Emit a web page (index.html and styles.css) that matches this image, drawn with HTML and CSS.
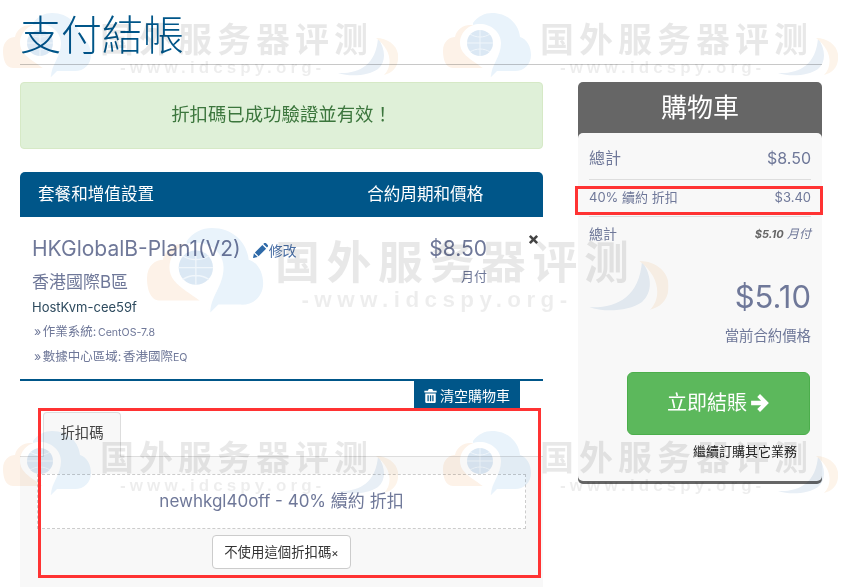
FILE: index.html
```html
<!doctype html>
<html lang="zh-Hant">

<head>
    <meta charset="utf-8">
    <title>支付結帳</title>
    <link rel="stylesheet" href="styles.css">
</head>

<body>
    <svg class="svg-defs" width="0" height="0">
        <defs>
            <g id="wm-cloud">
                <path d="M22 55H10C2 55 0 45 0 38c0-10 7-14 12-14 2-10 14-15 22-10l6 41z" fill="#fdf2e8" />
                <path d="M49 0c17 0 27 12 28 24 7 2 11 10 11 18 0 10-8 17-18 16H54l-6 6-16-30L30 10C35 3 42 0 49 0z" fill="#e9f3fb" />
                <path d="M48 64C40 50 17 46 17 30c0-11 9-19 20-19s21 8 21 19c0 14-10 22-10 34z" fill="#fff" />
                <circle cx="37" cy="30" r="13" fill="#dbe8f4" />
                <path d="M24 30h26M37 17v26M27 21c6 4 14 4 20 0M27 39c6-4 14-4 20 0" stroke="#f0f6fb" stroke-width="1" fill="none" />
            </g>
            <g id="wm-swoosh">
                <path d="M0 35c20 1 38-7 40-35 8 12 8 24 0 31-10 7-28 8-40 4z" fill="#e8eff6" />
                <path d="M38 0c14 0 24 10 22 22-1 8-6 13-14 15 8-8 9-24-8-37z" fill="#fdf4ea" />
            </g>
        </defs>
    </svg>

    <div class="wm wm-tl">
        <svg class="wm-cloud" viewBox="0 0 90 70"><use href="#wm-cloud" /></svg>
        <div class="wm-name">国外服务器评测</div>
        <div class="wm-url">-www.idcspy.org-</div>
        <svg class="wm-swoosh" viewBox="0 0 60 40"><use href="#wm-swoosh" /></svg>
    </div>
    <div class="wm wm-tr">
        <svg class="wm-cloud" viewBox="0 0 90 70"><use href="#wm-cloud" /></svg>
        <div class="wm-name">国外服务器评测</div>
        <div class="wm-url">-www.idcspy.org-</div>
        <svg class="wm-swoosh" viewBox="0 0 60 40"><use href="#wm-swoosh" /></svg>
    </div>
    <div class="wm wm-mid">
        <svg class="wm-cloud" viewBox="0 0 90 70"><use href="#wm-cloud" /></svg>
        <div class="wm-name">国外服务器评测</div>
        <div class="wm-url">-www.idcspy.org-</div>
        <svg class="wm-swoosh" viewBox="0 0 60 40"><use href="#wm-swoosh" /></svg>
    </div>
    <div class="wm wm-bl">
        <svg class="wm-cloud" viewBox="0 0 90 70"><use href="#wm-cloud" /></svg>
        <div class="wm-name">国外服务器评测</div>
        <div class="wm-url">-www.idcspy.org-</div>
        <svg class="wm-swoosh" viewBox="0 0 60 40"><use href="#wm-swoosh" /></svg>
    </div>
    <div class="wm wm-br">
        <svg class="wm-cloud" viewBox="0 0 90 70"><use href="#wm-cloud" /></svg>
        <div class="wm-name">国外服务器评测</div>
        <div class="wm-url">-www.idcspy.org-</div>
        <svg class="wm-swoosh" viewBox="0 0 60 40"><use href="#wm-swoosh" /></svg>
    </div>

    <div class="page">
        <h1 class="page-title">支付結帳</h1>

        <div class="columns">
            <div class="main-col">
                <div class="alert-ok">折扣碼已成功驗證並有效！</div>

                <div class="items-head">
                    <span>套餐和增值設置</span>
                    <span class="items-head-price">合約周期和價格</span>
                </div>

                <div class="item">
                    <div class="item-info">
                        <div class="item-name">HKGlobalB-Plan1(V2)
                            <a class="item-edit">
                                <svg class="icon-pencil" viewBox="0 0 16 16"><path d="M0 16l1-5 4 4zM2 10l8-8 4 4-8 8zM11 1l1-1c1-.4 1.500-.2 2 .3l1.700 1.700c.5.5.6 1.200.2 1.800l-1 1z" /></svg>修改
                            </a>
                        </div>
                        <div class="item-group">香港國際B區</div>
                        <div class="item-host">HostKvm-cee59f</div>
                        <div class="item-opt">» 作業系統: <small>CentOS-7.8</small></div>
                        <div class="item-opt">» 數據中心區域: 香港國際<small>EQ</small></div>
                    </div>
                    <div class="item-price">
                        <div class="item-amount">$8.50</div>
                        <div class="item-cycle">月付</div>
                    </div>
                    <svg class="item-remove" viewBox="0 0 12 12"><path d="M1 3l2-2 3 3 3-3 2 2-3 3 3 3-2 2-3-3-3 3-2-2 3-3z" /></svg>
                </div>

                <div class="empty-row">
                    <a class="empty-btn">
                        <svg class="icon-trash" viewBox="0 0 14 16"><path d="M5 0h4l1 2h4v2H0V2h4zM1 5h12v10l-1 1H2l-1-1zM3.500 7v7h1.500V7zM6.300 7v7h1.500V7zM9 7v7h1.500V7z" /></svg>清空購物車
                    </a>
                </div>

                <div class="tabs">
                    <a class="tab">折扣碼</a>
                </div>
                <div class="promo-panel">
                    <div class="promo-box">newhkgl40off - 40% 續約 折扣</div>
                    <a class="promo-remove">不使用這個折扣碼<small>×</small></a>
                </div>
            </div>

            <div class="cart">
                <div class="cart-title">購物車</div>
                <div class="cart-body">
                    <div class="cart-row cart-row-sub"><span>總計</span><span>$8.50</span></div>
                    <div class="cart-row cart-row-disc"><span>40% 續約 折扣</span><span>$3.40</span></div>
                    <div class="cart-row cart-row-recur"><span>總計</span><span class="cart-recur"><b>$5.10</b> 月付</span></div>
                    <div class="cart-total">$5.10</div>
                    <div class="cart-total-label">當前合約價格</div>
                    <a class="checkout-btn">立即結賬<svg class="icon-arrow" viewBox="0 0 18 18"><path d="M1 7h9L6.500 3.500 9 1l8 8-8 8-2.500-2.500L10 11H1z" /></svg></a>
                    <a class="continue-link">繼續訂購其它業務</a>
                </div>
            </div>
        </div>
    </div>

    <div class="mark mark-cart"></div>
    <div class="mark mark-promo"></div>
</body>

</html>
```

FILE: styles.css
```css
html,
body {
    margin: 0;
    background-color: #fff;
    color: #6f7899;
    font-family: "Inter", "Noto Sans CJK TC", sans-serif;
}

body {
    width: 848px;
    height: 588px;
    overflow: hidden;
    position: relative;
}

.svg-defs {
    position: absolute;
}

/* watermark */
.wm {
    position: absolute;
    width: 395px;
    height: 66px;
    z-index: 5;
    pointer-events: none;
    transform-origin: top left;
    mix-blend-mode: multiply;
}

.wm-tl { left: 3px; top: 13px; }
.wm-tr { left: 443px; top: 13px; }
.wm-bl { left: 3px; top: 431px; }
.wm-br { left: 443px; top: 431px; }
.wm-mid { left: 147px; top: 228px; transform: scale(1.32); }

.wm-cloud {
    position: absolute;
    left: 0;
    top: 0;
    width: 90px;
    height: 70px;
}

.wm-name {
    position: absolute;
    left: 97px;
    top: 4px;
    font-family: "Noto Sans CJK SC", sans-serif;
    font-size: 34px;
    line-height: 42px;
    font-weight: 700;
    letter-spacing: 5px;
    white-space: nowrap;
    color: rgba(0, 0, 0, 0.09);
}

.wm-url {
    position: absolute;
    left: 117px;
    top: 45px;
    font-family: "Liberation Sans", sans-serif;
    font-size: 17px;
    line-height: 20px;
    font-weight: 700;
    letter-spacing: 4.100px;
    white-space: nowrap;
    color: rgba(0, 0, 0, 0.07);
}

.wm-swoosh {
    position: absolute;
    left: 335px;
    top: 25px;
    width: 60px;
    height: 40px;
}

/* page */
.page {
    padding: 0 26px 0 20px;
}

.page-title {
    margin: 0;
    height: 64px;
    border-bottom: 1px solid #c8c8c8;
    color: #005689;
    font-size: 41px;
    line-height: 70px;
    font-weight: 300;
}

.columns {
    display: flex;
    gap: 35px;
    padding-top: 17px;
}

.main-col {
    width: 523px;
}

.alert-ok {
    box-sizing: border-box;
    height: 67px;
    background-color: #dff0d8;
    border: 1px solid #d6e9c6;
    border-radius: 4px;
    color: #3c763d;
    font-size: 18.400px;
    line-height: 63px;
    text-align: center;
}

.items-head {
    display: flex;
    height: 45px;
    margin-top: 23px;
    padding-left: 18px;
    background-color: #005689;
    border-radius: 5px 5px 0 0;
    color: #fff;
    font-size: 16.600px;
    line-height: 45px;
}

.items-head-price {
    margin-left: 213px;
}

.item {
    display: flex;
    position: relative;
    height: 162px;
    border-bottom: 2px solid #005689;
}

.item-info {
    width: 388px;
    padding-left: 12px;
    padding-top: 19px;
}

.item-name {
    font-size: 21px;
    line-height: 26px;
    white-space: nowrap;
}

.item-edit {
    font-size: 14px;
    margin-left: 6px;
    color: #4a6fa5;
}

.icon-pencil {
    width: 15px;
    height: 15px;
    margin-right: 1px;
    vertical-align: -2px;
    fill: #2f6aa8;
}

.item-group {
    font-size: 17px;
    line-height: 26px;
    margin-top: 5px;
}

.item-host {
    font-size: 13px;
    line-height: 18px;
    margin-top: 3px;
    color: #2d4a5e;
}

.item-opt {
    font-size: 12.500px;
    line-height: 24px;
    padding-left: 2px;
    word-spacing: -2px;
}

.item-host + .item-opt {
    margin-top: 4px;
}

.item-opt small {
    font-size: 10.600px;
}

.item-price {
    width: 67px;
    padding-top: 19px;
    text-align: right;
}

.item-amount {
    font-size: 21px;
    line-height: 26px;
}

.item-cycle {
    font-size: 13px;
    line-height: 20px;
    margin-top: 4px;
}

.item-remove {
    position: absolute;
    left: 508px;
    top: 17px;
    width: 11px;
    height: 11px;
    fill: #444;
}

.empty-row {
    display: flex;
    justify-content: flex-end;
    padding-right: 23px;
}

.empty-btn {
    box-sizing: border-box;
    width: 106px;
    height: 29px;
    background-color: #005689;
    color: #fff;
    font-size: 14px;
    line-height: 29px;
    text-align: center;
    white-space: nowrap;
}

.icon-trash {
    width: 13px;
    height: 14px;
    margin-right: 3px;
    vertical-align: -2px;
    fill: #fff;
}

.tabs {
    display: flex;
    height: 45px;
    margin-top: 2px;
    padding-left: 23px;
    margin-bottom: -1px;
    position: relative;
}

.tab {
    box-sizing: border-box;
    width: 78px;
    height: 45px;
    background-color: #f8f8f8;
    border: 1px solid #ddd;
    border-bottom: 0;
    border-radius: 4px 4px 0 0;
    color: #444;
    font-size: 14.400px;
    line-height: 40px;
    text-align: center;
}

.promo-panel {
    box-sizing: border-box;
    height: 131px;
    padding: 17px 17px 0;
    background-color: #f8f8f8;
    border-top: 1px solid #ddd;
    text-align: center;
}

.promo-box {
    box-sizing: border-box;
    height: 55px;
    background-color: #fff;
    border: 1px dashed #ccc;
    font-size: 17px;
    line-height: 53px;
}

.promo-remove {
    display: inline-block;
    box-sizing: border-box;
    width: 139px;
    height: 34px;
    margin-top: 6px;
    background-color: #fff;
    border: 1px solid #ccc;
    border-radius: 4px;
    color: #333;
    font-size: 13.400px;
    line-height: 32px;
    white-space: nowrap;
}

.cart {
    width: 244px;
    height: 402px;
    background-color: #666;
    border-radius: 5px;
}

.cart-title {
    height: 51px;
    color: #fff;
    font-size: 26px;
    line-height: 51px;
    text-align: center;
}

.cart-body {
    box-sizing: border-box;
    height: 348px;
    padding: 0 11px;
    background-color: #f8f8f8;
    border-radius: 5px;
}

.cart-row {
    display: flex;
    justify-content: space-between;
    border-bottom: 1px solid #ddd;
}

.cart-row-sub {
    height: 46px;
    font-size: 16px;
    line-height: 50px;
}

.cart-row-disc {
    height: 36px;
    font-size: 13px;
    line-height: 35px;
}

.cart-row-recur {
    height: 34px;
    font-size: 14px;
    line-height: 34px;
    border-bottom: 0;
}

.cart-recur {
    font-size: 12px;
    font-style: italic;
}

.cart-recur b {
    color: #666;
    font-size: 11px;
}

.cart-total {
    margin-top: 26px;
    font-size: 31px;
    line-height: 40px;
    text-align: right;
}

.cart-total-label {
    margin-top: 8px;
    font-size: 14.400px;
    line-height: 22px;
    text-align: right;
}

.checkout-btn {
    display: block;
    box-sizing: border-box;
    width: 183px;
    height: 63px;
    margin: 25px 0 0 38px;
    background-color: #5cb85c;
    border: 1px solid #4cae4c;
    border-radius: 6px;
    color: #fff;
    font-size: 20px;
    line-height: 60px;
    text-align: center;
}

.icon-arrow {
    width: 20px;
    height: 20px;
    margin-left: 3px;
    vertical-align: -3px;
    fill: #fff;
}

.continue-link {
    display: block;
    margin-top: 7px;
    padding-right: 14px;
    color: #222;
    font-size: 13px;
    line-height: 18px;
    text-align: right;
}

/* red annotation boxes */
.mark {
    position: absolute;
    box-sizing: border-box;
    border: 3px solid #ff3333;
    z-index: 6;
}

.mark-cart {
    left: 575px;
    top: 186px;
    width: 248px;
    height: 29px;
}

.mark-promo {
    left: 38px;
    top: 408px;
    width: 503px;
    height: 170px;
}
```
